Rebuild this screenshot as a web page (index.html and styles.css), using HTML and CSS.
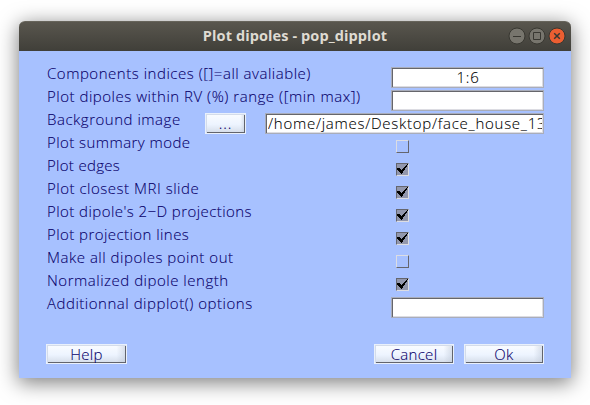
FILE: index.html
```html
<!DOCTYPE html>
<html lang="en">
<head>
<meta charset="utf-8">
<title>Plot dipoles - pop_dipplot</title>
<link rel="stylesheet" href="styles.css">
</head>
<body>
<svg class="defs" width="0" height="0"><symbol id="tick" viewBox="0 0 11 11"><path d="M0 4h3v1h1v1h1v-1h1v-1h1v-1h1v-1h1v-1h1v-1h1v1h-1v2h-1v1h-1v2h-1v1h-1v2h-1v1h-1v-1h-1v-1h-1v-1h-1v-1h-1z"/></symbol></svg>
<main class="window">
  <header class="titlebar">
    <h1>Plot dipoles - pop_dipplot</h1>
    <div class="controls">
      <svg class="ctl" viewBox="0 0 18 18"><circle cx="9" cy="9" r="8"/><path d="M5 9.5h8"/></svg>
      <svg class="ctl" viewBox="0 0 18 18"><circle cx="9" cy="9" r="8"/><path d="M5.5 5.5h7v7h-7z"/></svg>
      <svg class="ctl close" viewBox="0 0 18 18"><circle cx="9" cy="9" r="8"/><path d="M6.2 6.2l5.6 5.6M11.8 6.2l-5.6 5.6"/></svg>
    </div>
  </header>
  <section class="body">
    <div class="row"><span class="label">Components indices ([]=all avaliable)</span><div class="field center">1:6</div></div>
    <div class="row"><span class="label">Plot dipoles within RV (%) range ([min max])</span><div class="field"></div></div>
    <div class="row"><span class="label">Background image</span><div class="btn browse">...</div><div class="field wide">/home/james/Desktop/face_house_13</div></div>
    <div class="row"><span class="label tight">Plot summary mode</span><i class="check"></i></div>
    <div class="row"><span class="label tighter">Plot edges</span><i class="check on"><svg><use href="#tick"/></svg></i></div>
    <div class="row"><span class="label">Plot closest MRI slide</span><i class="check on"><svg><use href="#tick"/></svg></i></div>
    <div class="row"><span class="label tight">Plot dipole's 2−D projections</span><i class="check on"><svg><use href="#tick"/></svg></i></div>
    <div class="row"><span class="label tight">Plot projection lines</span><i class="check on"><svg><use href="#tick"/></svg></i></div>
    <div class="row"><span class="label">Make all dipoles point out</span><i class="check"></i></div>
    <div class="row"><span class="label">Normalized dipole length</span><i class="check on"><svg><use href="#tick"/></svg></i></div>
    <div class="row"><span class="label">Additionnal dipplot() options</span><div class="field"></div></div>
    <footer class="actions"><div class="btn help">Help</div><div class="btn">Cancel</div><div class="btn">Ok</div></footer>
  </section>
</main>
</body>
</html>
```
FILE: styles.css
```css
* { box-sizing: border-box; }
body { margin: 0; height: 405px; padding: 21px 19px 0; overflow: hidden; background: #fff; font: 300 15px/20px "Open Sans", "Noto Sans", sans-serif; }
.defs { display: none; }
.window { width: 552px; height: 357px; border-radius: 7px 7px 0 0; box-shadow: 0 4px 20px 1px rgba(0,0,0,.5); }
.titlebar { display: grid; grid-template-columns: 1fr; height: 30px; border-radius: 6px 6px 0 0; background: linear-gradient(#59564e, #403f39); border-top: 1px solid #67645b; }
.titlebar h1 { grid-area: 1 / 1; margin: 0; text-align: center; font: 700 14.5px/28px "Open Sans", sans-serif; letter-spacing: .1px; color: #dfdbd2; }
.controls { grid-area: 1 / 1; justify-self: end; display: flex; gap: 2px; padding: 5px 5px 0 0; }
.ctl { width: 18px; height: 18px; fill: #77756d; stroke: #383731; stroke-width: 1; }
.ctl path { fill: none; }
.close { fill: #ec5e31; }
.close path { stroke-width: 1.5; }
.body { height: 327px; padding: 16px 27px 0 28px; background: #a7c1ff; color: #08006a; -webkit-text-stroke: .1px; }
.row { display: flex; height: 23px; align-items: flex-start; white-space: nowrap; }
.label { width: 344px; height: 20px; margin-top: -4px; letter-spacing: .52px; }
.tight { letter-spacing: .44px; }
.tighter { letter-spacing: .3px; }
.field { width: 153px; height: 21px; border: 1px solid #a9adba; background: #fff; box-shadow: inset 1px 1px #66666b, inset -1px -1px #dcdce2; color: #000; line-height: 18px; padding: 0 1px 0 2px; overflow: clip; overflow-clip-margin: content-box; letter-spacing: .73px; }
.center { text-align: center; }
.row:has(.browse) .label { width: 158px; }
.wide { width: 279px; margin-left: 19px; }
.btn { height: 20px; width: 80px; border: 1px solid #e9f0fb; background: linear-gradient(to right, transparent 88%, rgba(190,200,215,.6)), linear-gradient(#fafcff, #edf4ff 55%, #d4dce8); box-shadow: inset 1px 1px #d4dcea, inset -1px -1px #62646c; text-align: center; line-height: 18px; letter-spacing: .3px; }
.browse { width: 41px; height: 21px; letter-spacing: 1px; }
.check { width: 13px; height: 13px; margin: 4px 0 0 5px; border: 1px solid; border-color: #dcdde3 #65666e #65666e #dcdde3; }
.on { background: #9297ad; border-color: #65666e #dcdde3 #dcdde3 #65666e; }
.check svg { display: block; width: 11px; height: 11px; fill: #000; shape-rendering: crispEdges; }
.actions { display: flex; gap: 10px; margin: 24px 0 0 -1px; }
.help { width: 81px; margin-right: auto; }
```
